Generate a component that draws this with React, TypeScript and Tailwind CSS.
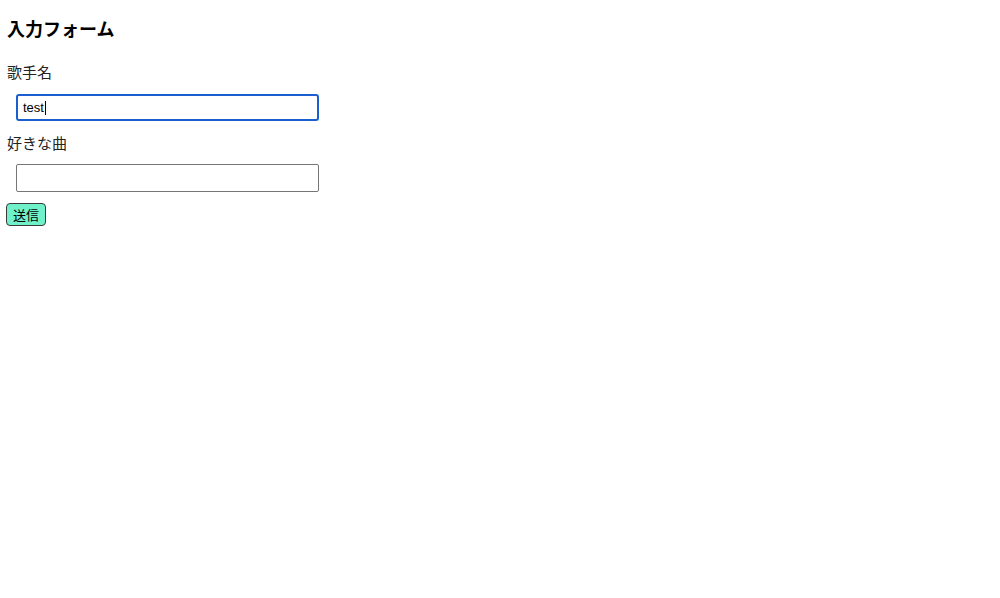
export default function App() {
  const font = { fontFamily: '"Noto Sans CJK JP", "Noto Sans", sans-serif' };
  return (
    <div className="min-h-[598px] w-[1000px] bg-white px-[7px] pt-[17px] text-[#222]" style={font}>
      <h3 className="text-[18px] font-bold leading-[22px] text-black">入力フォーム</h3>
      <form className="flex flex-col items-start">
        <label className="mt-[21px] text-[15px] leading-[24px]">歌手名</label>
        <div className="ml-[9px] mt-[10px] flex h-[27px] w-[303px] items-center rounded-[3px] border-2 border-[#1a5fd0] bg-white px-[5px]">
          <span className="text-[13px] leading-none text-black" style={{ fontFamily: '"Liberation Sans", Arial, sans-serif' }}>test</span>
          <span className="ml-px h-[14px] w-px bg-black" />
        </div>
        <label className="mt-[10px] text-[15px] leading-[24px]">好きな曲</label>
        <input
          type="text"
          className="ml-[9px] mt-[9px] h-[28px] w-[303px] rounded-[2px] border border-[#767676] bg-white px-[6px] text-[13px] outline-none"
        />
        <button
          type="button"
          className="-ml-px mt-[11px] h-[23px] rounded-[4px] border border-[#3a3a3a] bg-[#6ff2c9] px-[6px] text-[13px] leading-none text-black"
        >
          送信
        </button>
      </form>
    </div>
  );
}
